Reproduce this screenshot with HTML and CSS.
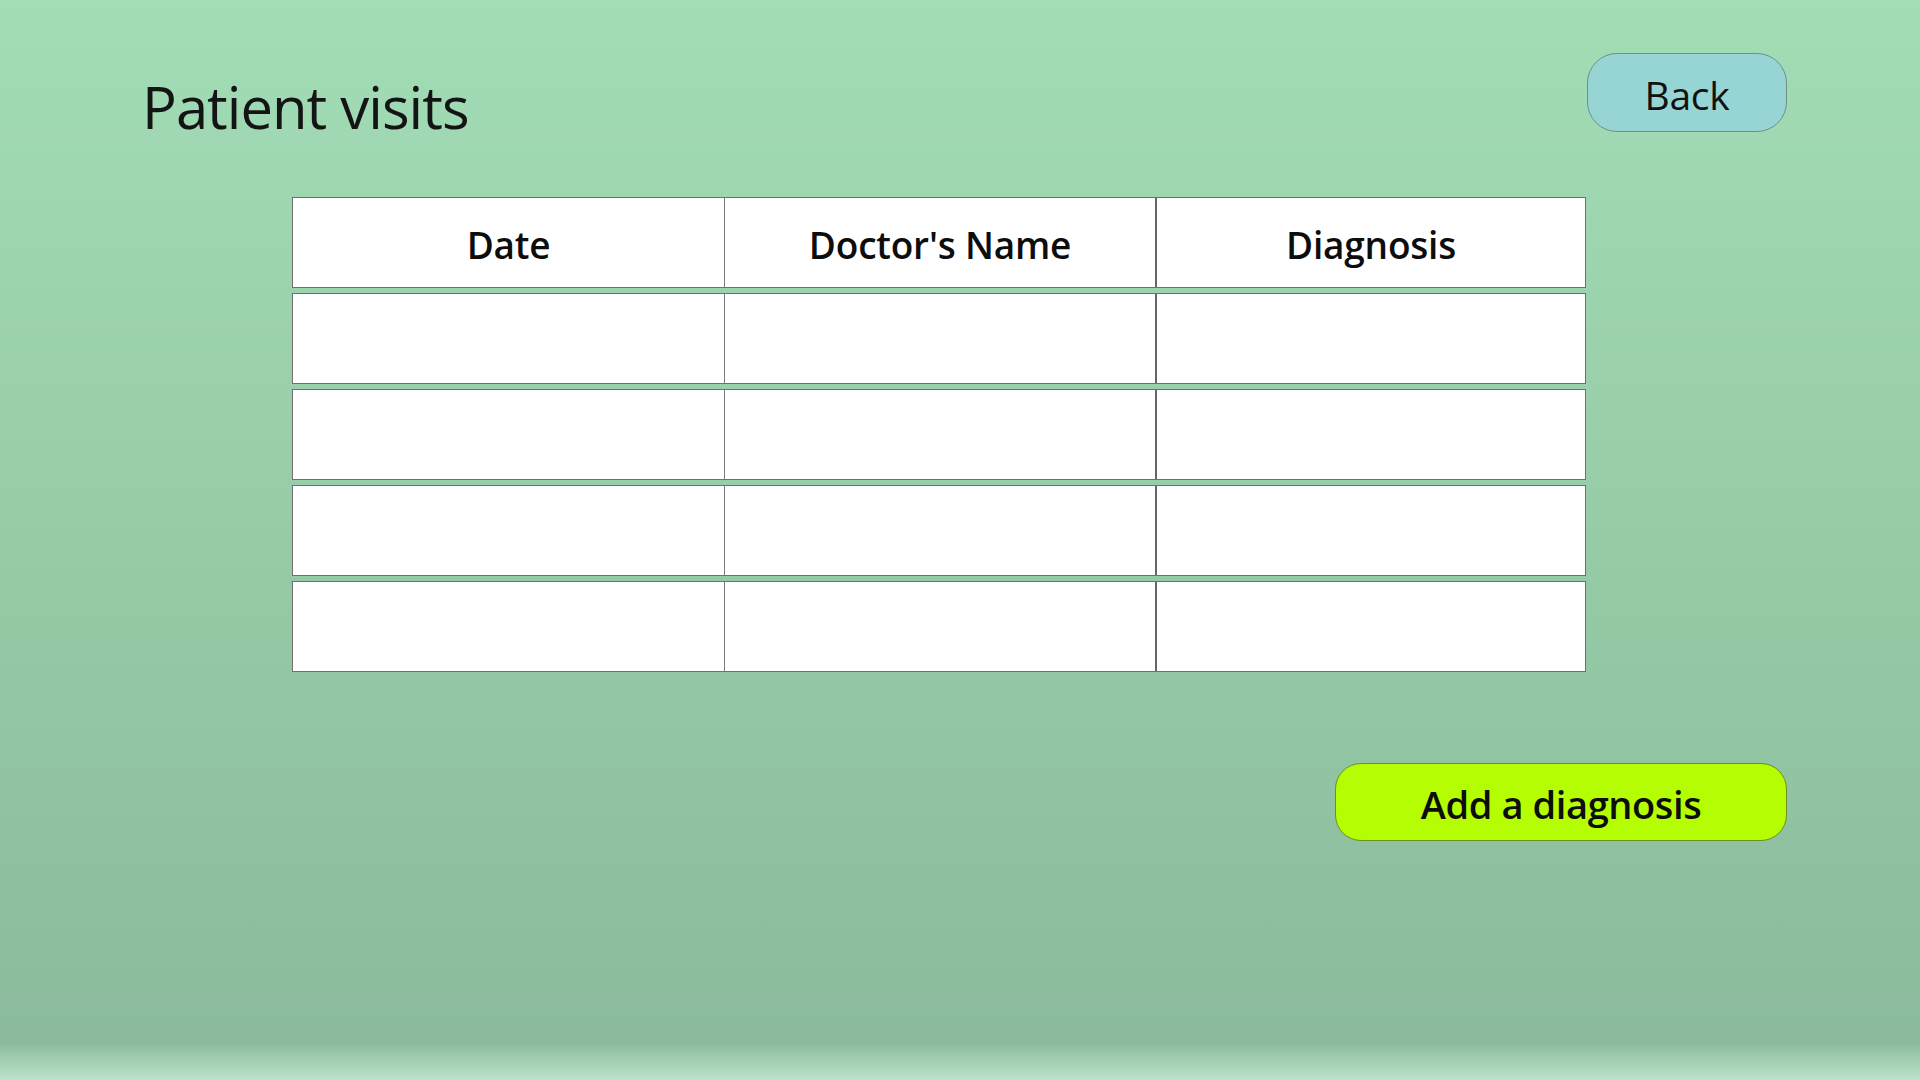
FILE: index.html
```html
<!DOCTYPE html>
<html lang="en">
<head>
<meta charset="utf-8">
<title>Patient visits</title>
<link rel="stylesheet" href="styles.css">
</head>
<body>
<div class="page">
  <header class="top">
    <h1 class="title">Patient visits</h1>
    <button class="btn back">Back</button>
  </header>
  <section class="table">
    <div class="row head">
      <div class="cell">Date</div>
      <div class="cell">Doctor's Name</div>
      <div class="cell">Diagnosis</div>
    </div>
    <div class="row"><div class="cell"></div><div class="cell"></div><div class="cell"></div></div>
    <div class="row"><div class="cell"></div><div class="cell"></div><div class="cell"></div></div>
    <div class="row"><div class="cell"></div><div class="cell"></div><div class="cell"></div></div>
    <div class="row"><div class="cell"></div><div class="cell"></div><div class="cell"></div></div>
  </section>
  <div class="actions">
    <button class="btn add">Add a diagnosis</button>
  </div>
</div>
</body>
</html>
```
FILE: styles.css
```css
* { box-sizing: border-box; }
html, body { margin: 0; padding: 0; }
body {
  font-family: "Open Sans", "Noto Sans", sans-serif;
  color: #151515;
}
.page {
  width: 1920px;
  height: 1080px;
  display: flex;
  flex-direction: column;
  background: linear-gradient(to bottom, #a2ddb6 0px, #97cca8 520px, #8bbb9c 1043px, #bde3cb 1080px);
  overflow: hidden;
}
.top {
  height: 132px;
  display: flex;
  justify-content: space-between;
  align-items: flex-start;
  padding: 53px 133px 0 142px;
}
.title {
  margin: 25px 0 0 0;
  font-size: 58px;
  font-weight: 400;
  line-height: 1;
  letter-spacing: -1px;
  color: #141414;
}
.btn {
  font-family: "Open Sans", "Noto Sans", sans-serif;
  color: #111;
  cursor: pointer;
  padding: 0;
}
.back {
  width: 200px;
  height: 79px;
  border-radius: 30px;
  border: 1px solid #6f8f8f;
  background: #97d5d4;
  font-size: 39px;
  font-weight: 400;
  letter-spacing: -0.3px;
  padding-top: 4px;
}
.table {
  margin: 65px 334px 0 292px;
  display: flex;
  flex-direction: column;
  gap: 5px;
}
.row {
  height: 91px;
  display: grid;
  grid-template-columns: 431px 431px 1fr;
  background: #fff;
  border: 1px solid #707070;
}
.cell {
  display: flex;
  align-items: center;
  justify-content: center;
}
.cell + .cell { border-left: 1px solid #7a7a7a; }
.cell:nth-child(3) { border-left: 2px solid #666; }
.head .cell {
  font-size: 37px;
  font-weight: 600;
  color: #0d0d0d;
  letter-spacing: -0.2px;
  padding-top: 4px;
}
.actions {
  display: flex;
  justify-content: flex-end;
  padding: 91px 133px 0 0;
}
.add {
  width: 452px;
  height: 78px;
  border-radius: 26px;
  border: 1px solid #6d8f24;
  background: #b4fd02;
  font-size: 38px;
  font-weight: 600;
  letter-spacing: -0.4px;
  color: #0d0d0d;
  padding-top: 4px;
}
```
